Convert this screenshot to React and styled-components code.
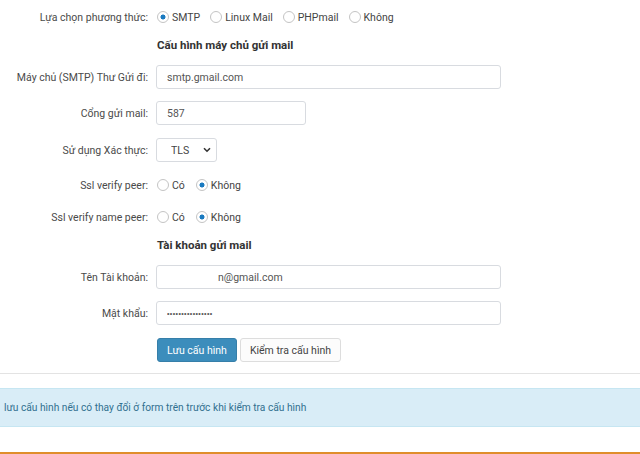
import React from "react";
import styled, { createGlobalStyle } from "styled-components";

const FONT = `Roboto, "Liberation Sans", Arial, sans-serif`;

const GlobalStyle = createGlobalStyle`
  html, body {
    margin: 0;
    padding: 0;
    background: #fff;
  }
  body {
    font-family: ${FONT};
    font-size: 10.5px;
    color: #444;
    overflow: hidden;
  }
`;

const Page = styled.div`
  width: 640px;
  height: 454px;
  display: flex;
  flex-direction: column;
`;

const Form = styled.form`
  display: flex;
  flex-direction: column;
`;

const Row = styled.div`
  display: flex;
  align-items: center;
  height: ${(p) => p.$h || 24}px;
  margin-top: ${(p) => p.$gap || 0}px;
`;

const Label = styled.label`
  width: 156px;
  flex: none;
  text-align: right;
  padding-right: 8px;
  box-sizing: border-box;
  color: #4a4a4a;
  white-space: nowrap;
`;

const Controls = styled.div`
  display: flex;
  align-items: center;
  gap: ${(p) => p.$gap || 0}px;
`;

const Heading = styled.h4`
  margin: 0 0 0 157px;
  font-size: 11.5px;
  font-weight: bold;
  color: #333;
`;

const TextInput = styled.input`
  width: ${(p) => p.$w}px;
  height: 24px;
  box-sizing: border-box;
  border: 1px solid #d8dbe0;
  border-radius: 3px;
  padding: 0 10px;
  font-family: ${FONT};
  font-size: 10.5px;
  color: #555;
  outline: none;
  text-indent: ${(p) => p.$indent || 0}px;
  &[type="password"] {
    font-family: "Liberation Sans", Arial, sans-serif;
    font-size: 7px;
    letter-spacing: 0.4px;
  }
`;

const SelectWrap = styled.div`
  position: relative;
  width: 61px;
  height: 24px;
`;

const Select = styled.select`
  appearance: none;
  width: 100%;
  height: 100%;
  border: 1px solid #d8dbe0;
  border-radius: 3px;
  background: #fff;
  padding: 0 0 0 14px;
  font-family: ${FONT};
  font-size: 10.5px;
  color: #444;
  outline: none;
`;

const Chevron = styled.svg`
  position: absolute;
  right: 6px;
  top: 9px;
  pointer-events: none;
`;

const Choice = styled.label`
  display: flex;
  align-items: center;
  gap: 3px;
  color: #444;
`;

const Radio = styled.input.attrs({ type: "radio" })`
  appearance: none;
  margin: 0 0 0 1px;
  width: 12px;
  height: 12px;
  border: 1px solid #c4c4c4;
  border-radius: 50%;
  box-sizing: border-box;
  background: #fff;
  &:checked {
    background: radial-gradient(circle, #1a7ac0 0 2.2px, #fff 2.8px);
  }
`;

const Buttons = styled.div`
  display: flex;
  gap: 3px;
  margin-left: 157px;
`;

const Button = styled.button`
  height: 24px;
  padding: 0 9px;
  border-radius: 3px;
  font-family: ${FONT};
  font-size: 10.5px;
  cursor: pointer;
  border: 1px solid ${(p) => (p.$primary ? "#367fa9" : "#ddd")};
  background: ${(p) => (p.$primary ? "#3c8dbc" : "#fcfcfc")};
  color: ${(p) => (p.$primary ? "#fff" : "#444")};
`;

const Divider = styled.hr`
  margin: 11px 0 0;
  border: 0;
  border-top: 1px solid #e3e3e3;
  width: 100%;
`;

const Alert = styled.div`
  margin-top: 14px;
  height: 39px;
  box-sizing: border-box;
  display: flex;
  align-items: center;
  padding-left: 4px;
  background: #d9edf7;
  border-top: 1px solid #c6e6f2;
  border-bottom: 1px solid #c6e6f2;
  color: #31708f;
  font-size: 10.2px;
`;

const Footer = styled.div`
  margin-top: auto;
  height: 2px;
  background: #e08e2b;
`;

function RadioGroup({ name, options, value, gap = 10 }) {
  return (
    <Controls $gap={gap}>
      {options.map((opt) => (
        <Choice key={opt}>
          <Radio name={name} defaultChecked={opt === value} />
          {opt}
        </Choice>
      ))}
    </Controls>
  );
}

export default function App() {
  return (
    <Page>
      <GlobalStyle />
      <Form onSubmit={(e) => e.preventDefault()}>
        <Row $gap={5}>
          <Label>Lựa chọn phương thức:</Label>
          <RadioGroup
            name="method"
            options={["SMTP", "Linux Mail", "PHPmail", "Không"]}
            value="SMTP"
            gap={9}
          />
        </Row>
        <Row $h={20} $gap={6}>
          <Heading>Cấu hình máy chủ gửi mail</Heading>
        </Row>
        <Row $gap={10}>
          <Label>Máy chủ (SMTP) Thư Gửi đi:</Label>
          <TextInput $w={345} defaultValue="smtp.gmail.com" />
        </Row>
        <Row $gap={12}>
          <Label>Cổng gửi mail:</Label>
          <TextInput $w={150} defaultValue="587" />
        </Row>
        <Row $gap={13}>
          <Label>Sử dụng Xác thực:</Label>
          <SelectWrap>
            <Select defaultValue="TLS">
              <option>TLS</option>
              <option>SSL</option>
            </Select>
            <Chevron width="8" height="6" viewBox="0 0 8 6">
              <path d="M1 1.2l3 3 3-3" fill="none" stroke="#333" strokeWidth="1.6" />
            </Chevron>
          </SelectWrap>
        </Row>
        <Row $gap={11}>
          <Label>Ssl verify peer:</Label>
          <RadioGroup name="peer" options={["Có", "Không"]} value="Không" />
        </Row>
        <Row $gap={8}>
          <Label>Ssl verify name peer:</Label>
          <RadioGroup name="namepeer" options={["Có", "Không"]} value="Không" />
        </Row>
        <Row $h={20} $gap={6}>
          <Heading>Tài khoản gửi mail</Heading>
        </Row>
        <Row $gap={10}>
          <Label>Tên Tài khoản:</Label>
          <TextInput $w={345} $indent={51} defaultValue="n@gmail.com" />
        </Row>
        <Row $gap={12}>
          <Label>Mật khẩu:</Label>
          <TextInput $w={345} type="password" defaultValue="1234567890123456" />
        </Row>
        <Row $gap={13}>
          <Buttons>
            <Button $primary type="submit">Lưu cấu hình</Button>
            <Button type="button">Kiểm tra cấu hình</Button>
          </Buttons>
        </Row>
      </Form>
      <Divider />
      <Alert>lưu cấu hình nếu có thay đổi ở form trên trước khi kiểm tra cấu hình</Alert>
      <Footer />
    </Page>
  );
}
